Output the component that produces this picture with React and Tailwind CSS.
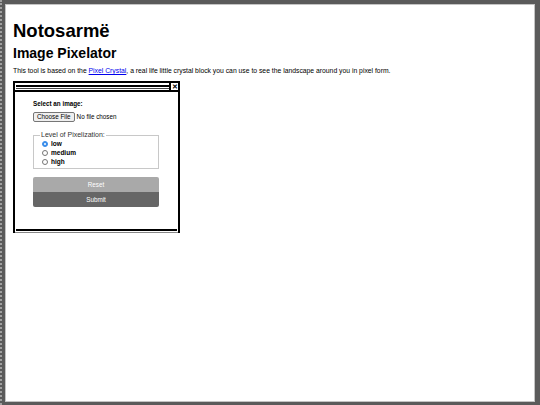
import React from "react";

function Radio({ checked, label }) {
  return (
    <label className="flex items-center gap-[3px] h-[9px]">
      {checked ? (
        <span className="w-[6px] h-[6px] rounded-full border-[1.5px] border-[#3b8eea] bg-[#3b8eea] flex items-center justify-center">
          <span className="w-[2px] h-[2px] rounded-full bg-white" />
        </span>
      ) : (
        <span className="w-[6px] h-[6px] rounded-full border border-[#767676] bg-white" />
      )}
      <span className="font-bold text-[6.5px] text-black">{label}</span>
    </label>
  );
}

function PixelWindow() {
  return (
    <div className="mt-[6px] w-[167px] h-[152px] border-x-2 border-t-2 border-black flex flex-col">
      <div className="flex h-[9px] border-b-2 border-black">
        <div className="flex-1 flex flex-col justify-center pl-[1px] pt-[1px]">
          <div className="h-[2px] bg-black" />
          <div className="h-[1px] mt-[1px] bg-[#444]" />
        </div>
        <div className="w-[9px] border-l-2 border-black flex items-center justify-center text-[7px] leading-none font-bold">
          ✕
        </div>
      </div>
      <div className="pl-[18px] pt-[8px] flex-1">
        <div className="font-bold text-[6.3px] leading-[8px]">Select an image:</div>
        <div className="flex items-center mt-[4px]">
          <span className="h-[10px] px-[3px] flex items-center bg-[#efefef] border border-[#767676] rounded-[2px] text-[6.3px]">
            Choose File
          </span>
          <span className="ml-[2px] text-[6.3px]">No file chosen</span>
        </div>
        <fieldset className="mt-[9px] w-[126px] h-[38px] border border-[#c8c8c8] px-[8px] pb-[2px]">
          <legend className="text-[7px] leading-[8px] text-[#333] px-[1px] ml-[-2px]">
            Level of Pixelization:
          </legend>
          <Radio checked label="low" />
          <Radio label="medium" />
          <Radio label="high" />
        </fieldset>
        <div className="mt-[8px] w-[126px]">
          <div className="h-[15px] bg-[#a9a9a9] rounded-t-[2px] flex items-center justify-center text-white text-[6.3px]">
            Reset
          </div>
          <div className="h-[15px] bg-[#666666] rounded-b-[2px] flex items-center justify-center text-white text-[6.3px]">
            Submit
          </div>
        </div>
      </div>
      <div className="h-[2px] bg-black mx-[1px]" />
      <div className="h-[1px] bg-white" />
      <div className="h-[1px] bg-[#888]" />
    </div>
  );
}

export default function App() {
  return (
    <div
      className="w-[540px] h-[405px] bg-[#5b5b5b] border-l-2 border-dotted border-[#a0a0a0] pl-[3px] pr-[5px] pt-[4px] pb-[3px]"
      style={{ fontFamily: '"Liberation Sans", Arial, sans-serif' }}
    >
      <div className="h-full bg-white border border-[#c4c4c4] px-[7px] pt-[15px] text-black">
        <h1 className="text-[18.5px] leading-[21px] font-bold">Notosarmë</h1>
        <h2 className="mt-[4px] text-[14px] leading-[16px] font-bold">Image Pixelator</h2>
        <p className="mt-[6px] text-[6.8px] leading-[8px]">
          This tool is based on the{" "}
          <a href="#" className="text-[#0000ee] underline">
            Pixel Crystal
          </a>
          , a real life little crystal block you can use to see the landscape around you in pixel form.
        </p>
        <PixelWindow />
      </div>
    </div>
  );
}
